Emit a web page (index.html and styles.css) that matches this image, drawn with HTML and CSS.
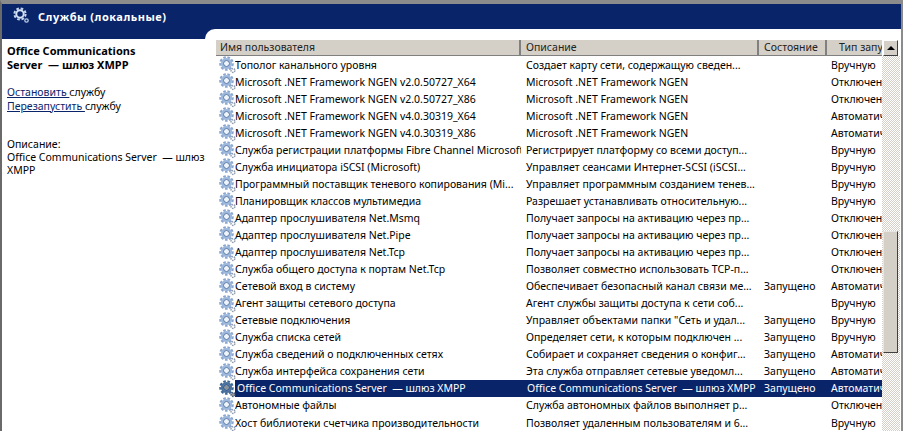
FILE: index.html
```html
<!DOCTYPE html>
<html>
<head>
    <link rel="stylesheet" href="styles.css">
</head>
<body>
  <svg class="defs" width="0" height="0">
    <defs>
      <symbol id="gear" viewBox="0 0 18 18">
        <circle cx="14" cy="14.5" r="1.9" fill="#fff" stroke="#8f9cae" stroke-width="1.5" stroke-dasharray="1.4 .8"/>
        <circle cx="7.5" cy="7.5" r="6.2" fill="none" stroke="#8aa6cf" stroke-width="2.2" stroke-dasharray="2.6 1.6"/>
        <circle cx="7.5" cy="7.5" r="4.4" fill="none" stroke="#9db8dd" stroke-width="2.4"/>
        <circle cx="7.5" cy="7.5" r="3" fill="#eef4fb" stroke="#4f6f9f" stroke-width="1"/>
      </symbol>
      <symbol id="gear-title" viewBox="0 0 18 18">
        <circle cx="13.5" cy="13.5" r="1.7" fill="#0a246a" stroke="#b9cbe6" stroke-width="1.3"/>
        <circle cx="7" cy="7" r="5.6" fill="none" stroke="#c4d5ee" stroke-width="2" stroke-dasharray="2.6 1.8"/>
        <circle cx="7" cy="7" r="3.7" fill="#0a246a" stroke="#d6e3f5" stroke-width="2"/>
      </symbol>
    </defs>
  </svg>
  <div class="window">
    <div class="title-bar">
      <svg class="title-icon"><use href="#gear-title"/></svg>
      <span>Службы (локальные)</span>
    </div>
    <div class="main">
      <div class="side">
        <div class="side-name">Office Communications Server &nbsp;— шлюз XMPP</div>
        <div class="side-links">
          <div><a href="#">Остановить </a>службу</div>
          <div><a href="#">Перезапустить </a>службу</div>
        </div>
        <div class="side-desc">
          Описание:<br>
          Office Communications Server &nbsp;— шлюз XMPP
        </div>
      </div>
      <div class="list">
        <div class="list-body">
          <div class="row head">
            <div class="c1">Имя пользователя</div>
            <div class="c2">Описание</div>
            <div class="c3">Состояние</div>
            <div class="c4">Тип запу</div>
          </div>
          <div class="row"><svg class="icon"><use href="#gear"/></svg><div class="c1">Тополог канального уровня</div><div class="c2">Создает карту сети, содержащую сведен...</div><div class="c3"></div><div class="c4">Вручную</div></div>
          <div class="row"><svg class="icon"><use href="#gear"/></svg><div class="c1">Microsoft .NET Framework NGEN v2.0.50727_X64</div><div class="c2">Microsoft .NET Framework NGEN</div><div class="c3"></div><div class="c4">Отключена</div></div>
          <div class="row"><svg class="icon"><use href="#gear"/></svg><div class="c1">Microsoft .NET Framework NGEN v2.0.50727_X86</div><div class="c2">Microsoft .NET Framework NGEN</div><div class="c3"></div><div class="c4">Отключена</div></div>
          <div class="row"><svg class="icon"><use href="#gear"/></svg><div class="c1">Microsoft .NET Framework NGEN v4.0.30319_X64</div><div class="c2">Microsoft .NET Framework NGEN</div><div class="c3"></div><div class="c4">Автоматически</div></div>
          <div class="row"><svg class="icon"><use href="#gear"/></svg><div class="c1">Microsoft .NET Framework NGEN v4.0.30319_X86</div><div class="c2">Microsoft .NET Framework NGEN</div><div class="c3"></div><div class="c4">Автоматически</div></div>
          <div class="row"><svg class="icon"><use href="#gear"/></svg><div class="c1">Служба регистрации платформы Fibre Channel Microsoft</div><div class="c2">Регистрирует платформу со всеми доступ...</div><div class="c3"></div><div class="c4">Вручную</div></div>
          <div class="row"><svg class="icon"><use href="#gear"/></svg><div class="c1">Служба инициатора iSCSI (Microsoft)</div><div class="c2">Управляет сеансами Интернет-SCSI (iSCSI...</div><div class="c3"></div><div class="c4">Вручную</div></div>
          <div class="row"><svg class="icon"><use href="#gear"/></svg><div class="c1">Программный поставщик теневого копирования (Mi...</div><div class="c2">Управляет программным созданием тенев...</div><div class="c3"></div><div class="c4">Вручную</div></div>
          <div class="row"><svg class="icon"><use href="#gear"/></svg><div class="c1">Планировщик классов мультимедиа</div><div class="c2">Разрешает устанавливать относительную...</div><div class="c3"></div><div class="c4">Вручную</div></div>
          <div class="row"><svg class="icon"><use href="#gear"/></svg><div class="c1">Адаптер прослушивателя Net.Msmq</div><div class="c2">Получает запросы на активацию через пр...</div><div class="c3"></div><div class="c4">Отключена</div></div>
          <div class="row"><svg class="icon"><use href="#gear"/></svg><div class="c1">Адаптер прослушивателя Net.Pipe</div><div class="c2">Получает запросы на активацию через пр...</div><div class="c3"></div><div class="c4">Отключена</div></div>
          <div class="row"><svg class="icon"><use href="#gear"/></svg><div class="c1">Адаптер прослушивателя Net.Tcp</div><div class="c2">Получает запросы на активацию через пр...</div><div class="c3"></div><div class="c4">Отключена</div></div>
          <div class="row"><svg class="icon"><use href="#gear"/></svg><div class="c1">Служба общего доступа к портам Net.Tcp</div><div class="c2">Позволяет совместно использовать TCP-п...</div><div class="c3"></div><div class="c4">Отключена</div></div>
          <div class="row"><svg class="icon"><use href="#gear"/></svg><div class="c1">Сетевой вход в систему</div><div class="c2">Обеспечивает безопасный канал связи ме...</div><div class="c3">Запущено</div><div class="c4">Автоматически</div></div>
          <div class="row"><svg class="icon"><use href="#gear"/></svg><div class="c1">Агент защиты сетевого доступа</div><div class="c2">Агент службы защиты доступа к сети соб...</div><div class="c3"></div><div class="c4">Вручную</div></div>
          <div class="row"><svg class="icon"><use href="#gear"/></svg><div class="c1">Сетевые подключения</div><div class="c2">Управляет объектами папки "Сеть и удал...</div><div class="c3">Запущено</div><div class="c4">Вручную</div></div>
          <div class="row"><svg class="icon"><use href="#gear"/></svg><div class="c1">Служба списка сетей</div><div class="c2">Определяет сети, к которым подключен ...</div><div class="c3">Запущено</div><div class="c4">Вручную</div></div>
          <div class="row"><svg class="icon"><use href="#gear"/></svg><div class="c1">Служба сведений о подключенных сетях</div><div class="c2">Собирает и сохраняет сведения о конфиг...</div><div class="c3">Запущено</div><div class="c4">Автоматически</div></div>
          <div class="row"><svg class="icon"><use href="#gear"/></svg><div class="c1">Служба интерфейса сохранения сети</div><div class="c2">Эта служба отправляет сетевые уведомл...</div><div class="c3">Запущено</div><div class="c4">Автоматически</div></div>
          <div class="row selected"><svg class="icon"><use href="#gear"/></svg><div class="c1">Office Communications Server &nbsp;— шлюз XMPP</div><div class="c2">Office Communications Server &nbsp;— шлюз XMPP</div><div class="c3">Запущено</div><div class="c4">Автоматически</div></div>
          <div class="row"><svg class="icon"><use href="#gear"/></svg><div class="c1">Автономные файлы</div><div class="c2">Служба автономных файлов выполняет р...</div><div class="c3"></div><div class="c4">Отключена</div></div>
          <div class="row"><svg class="icon"><use href="#gear"/></svg><div class="c1">Хост библиотеки счетчика производительности</div><div class="c2">Позволяет удаленным пользователям и 6...</div><div class="c3"></div><div class="c4">Вручную</div></div>
        </div>
        <div class="scrollbar">
          <div class="scroll-up"><span class="arrow"></span></div>
          <div class="scroll-track"><div class="scroll-thumb"></div></div>
        </div>
      </div>
    </div>
  </div>
</body>
</html>
```
FILE: styles.css
```css
html, body {
    margin: 0;
    padding: 0;
    height: 100%;
    overflow: hidden;
    background: #fff;
}

.defs {
    display: block;
    height: 0;
}

/* outer frame */
.window {
    height: 431px;
    box-sizing: border-box;
    border-top: 4px solid #8c8c8c;
    border-left: 2px solid #6a6a6a;
    border-right: 2px solid #8c8c8c;
    background: #0a246a;
    font-family: "Noto Sans", "Liberation Sans", sans-serif;
    font-size: 10.5px;
    color: #000;
    display: flex;
    flex-direction: column;
}

.title-bar {
    height: 25px;
    flex: none;
    display: flex;
    align-items: center;
    box-sizing: border-box;
    padding: 0 0 1px 11px;
    color: #fff;
    font-size: 11px;
    letter-spacing: 0.5px;
    font-weight: bold;
}

.title-icon {
    width: 18px;
    height: 18px;
    margin-right: 7px;
}

.main {
    flex: 1;
    display: flex;
    min-height: 0;
}

.side {
    width: 203px;
    flex: none;
    margin-top: 10px;
    background: #fff;
    padding: 5px 0 0 5px;
    box-sizing: border-box;
}

.side-name {
    font-size: 11px;
    font-weight: bold;
    line-height: 14px;
    width: 150px;
}

.side-links {
    margin-top: 14px;
    line-height: 13.5px;
}

.side-links a {
    color: #0a246a;
}

.side-desc {
    margin-top: 25px;
    line-height: 13px;
    width: 198px;
}

/* list panel has a rounded white corner over the blue header */
.list {
    flex: 1;
    background: #fff;
    border-top-left-radius: 10px;
    padding: 11px 0 0 11px;
    display: flex;
    min-width: 0;
    overflow: hidden;
}

.list-body {
    width: 666px;
    flex: none;
    overflow: hidden;
}

.row {
    display: flex;
    align-items: center;
    height: 17.05px;
    white-space: nowrap;
    position: relative;
    padding-left: 19px;
}

.row div {
    overflow: hidden;
    flex: none;
    box-sizing: border-box;
}

.c1 {
    width: 286px;
}

.c2 {
    width: 238px;
    padding-left: 5px;
}

.c3 {
    width: 68px;
    padding-left: 5px;
}

.c4 {
    width: 55px;
    padding-left: 4px;
}

.icon {
    position: absolute;
    left: 3px;
    top: 0;
    width: 18px;
    height: 18px;
}

.head {
    height: 16px;
    padding-left: 0;
    background: #d4d0c8;
    color: #222;
    border-bottom: 1px solid #808080;
    box-sizing: border-box;
}

.head div {
    height: 15px;
    line-height: 15px;
    padding-left: 5px;
    border-right: 2px solid #808080;
}

.head .c1 {
    width: 305px;
    padding-left: 4px;
}

.head .c2 {
    width: 238px;
}

.head .c3 {
    width: 68px;
}

.head .c4 {
    width: 55px;
    padding-left: 12px;
    border-right: 0;
}

.selected {
    color: #fff;
}

.selected .icon {
    filter: saturate(2.5) brightness(0.6);
}

.selected .c1, .selected .c2, .selected .c3, .selected .c4 {
    background: #0a246a;
    height: 17px;
    line-height: 17px;
}

.selected .c1 {
    padding-left: 2px;
}

.selected .c2 {
    padding-left: 6px;
}

.scrollbar {
    width: 18px;
    flex: none;
    display: flex;
    flex-direction: column;
}

.scroll-up {
    height: 16px;
    width: 15px;
    margin-left: 1px;
    background: #d4d0c8;
    box-sizing: border-box;
    border: 1px solid;
    border-color: #fff #404040 #404040 #fff;
    display: flex;
    align-items: center;
    justify-content: center;
}

.arrow {
    width: 0;
    height: 0;
    border-left: 4px solid transparent;
    border-right: 4px solid transparent;
    border-bottom: 4px solid #000;
}

.scroll-track {
    flex: 1;
    background: repeating-conic-gradient(#d4d0c8 0 25%, #fff 0 50%) 0 0 / 2px 2px;
    padding: 175px 2px 0 1px;
}

.scroll-thumb {
    height: 122px;
    box-sizing: border-box;
    background: #d4d0c8;
    border: 1px solid;
    border-color: #e8e6e0 #404040 #404040 #e8e6e0;
}
```
